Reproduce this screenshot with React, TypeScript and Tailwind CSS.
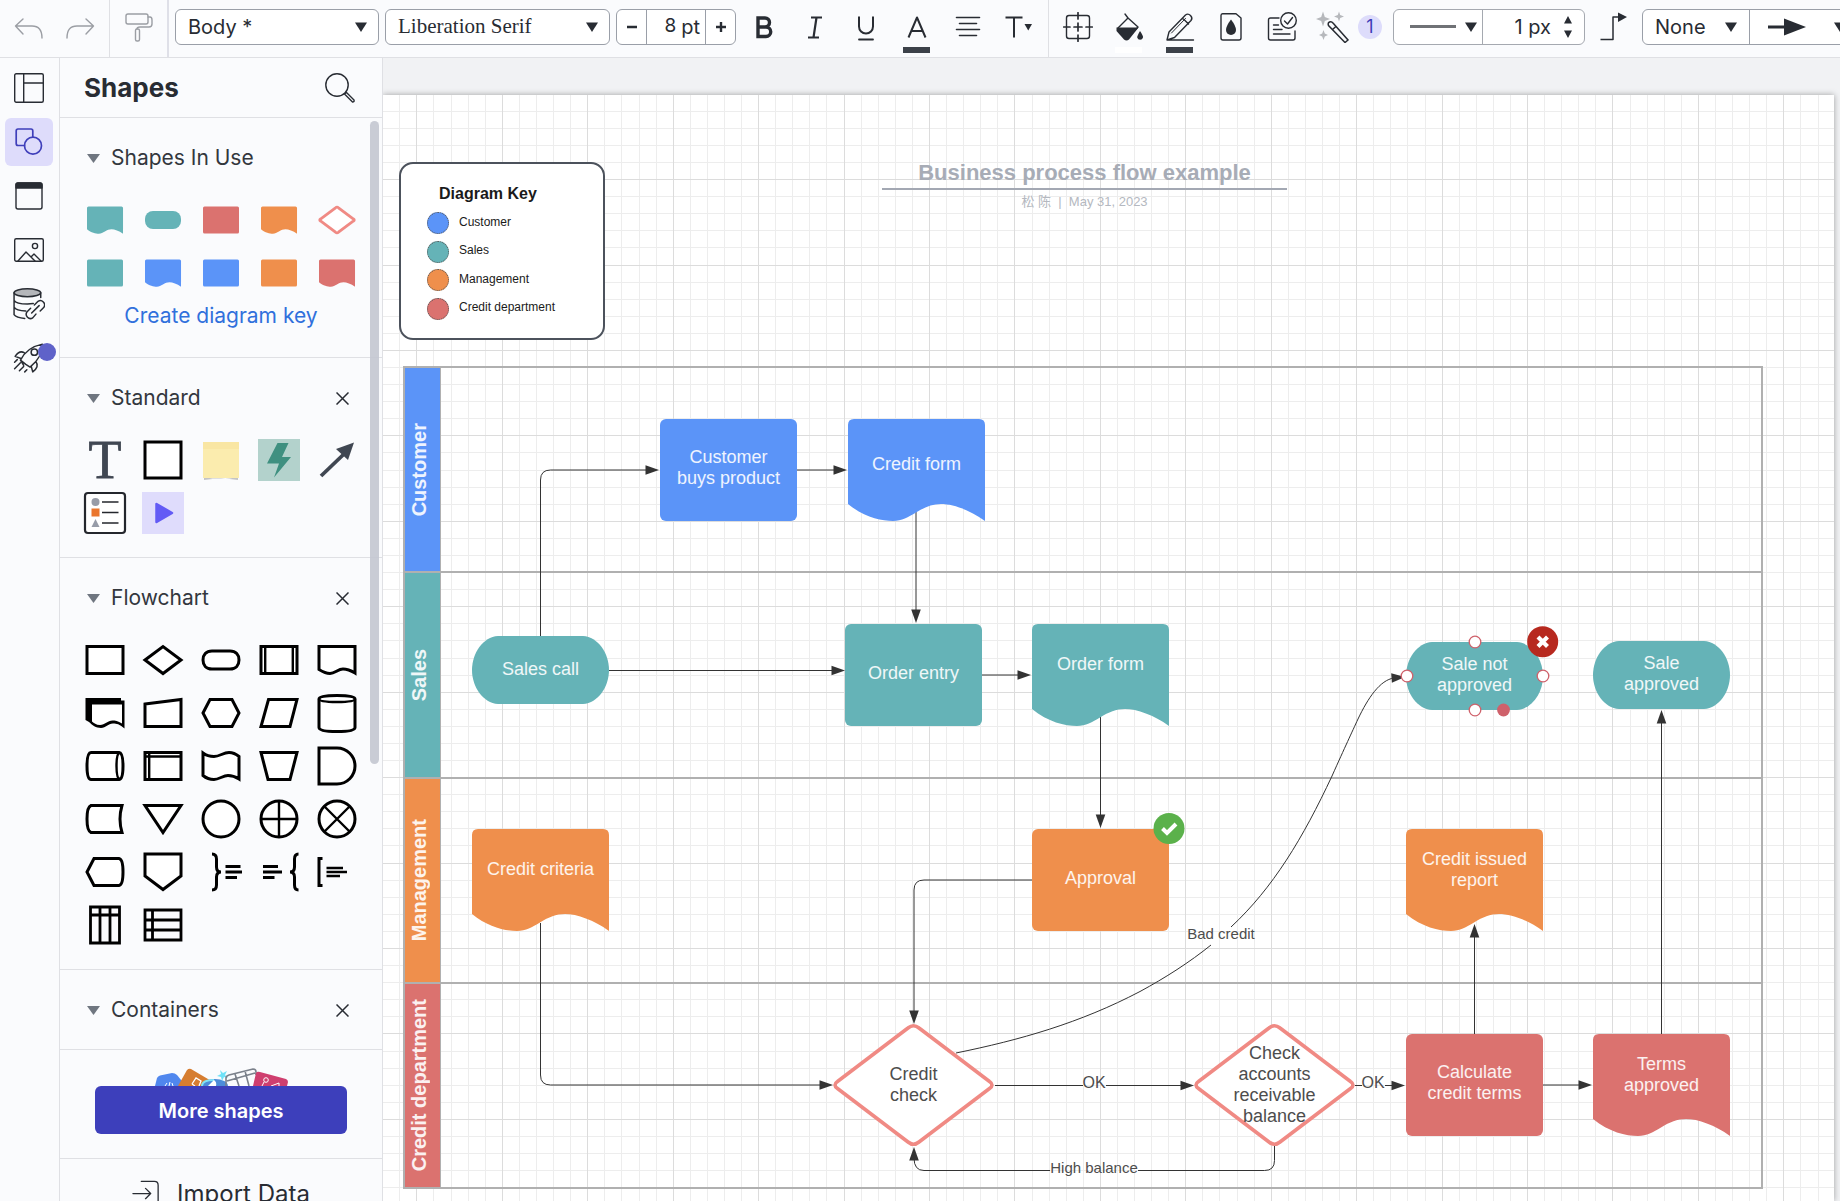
import React from "react";

const BLUE = "#5b94f8";
const TEAL = "#65b3b7";
const ORANGE = "#ef8f4c";
const RED = "#db726f";
const PINK = "#f08a84";
const INK = "#282c33";

/* Document co-ordinate shown at the top left corner of the page. */
const VIEW = { x: 383, y: 95 };

const WAVE =
  "M0 6 Q0 0 6 0 H131 Q137 0 137 6 V102 C122 91 105 85 93 85 C84 85 77 88 68 93.500 C60 98 54 102 45 102 C33 102 16 98 0 85 Z";

/* ---------- toolbar ---------- */

function Icon({ size = 30, children }: { size?: number; children: React.ReactNode }) {
  return (
    <svg
      width={size}
      height={size}
      viewBox="0 0 30 30"
      fill="none"
      stroke="currentColor"
      strokeWidth={1.4}
      strokeLinecap="round"
      strokeLinejoin="round"
      aria-hidden="true"
      className="shrink-0"
    >
      {children}
    </svg>
  );
}

function ToolButton({ label, children, bar }: { label: string; children: React.ReactNode; bar?: string }) {
  return (
    <button aria-label={label} className="relative flex h-[57px] w-[51px] shrink-0 items-center justify-center pb-[3px]">
      {children}
      {bar && <span className={`absolute bottom-1 h-[6px] w-[27px] ${bar}`} />}
    </button>
  );
}

function Caret({ className = "" }: { className?: string }) {
  return (
    <svg width="12" height="10" viewBox="0 0 12 10" className={`pointer-events-none shrink-0 ${className}`} aria-hidden="true">
      <path d="M0 0.500H12L6 10Z" fill={INK} />
    </svg>
  );
}

function Toolbar() {
  return (
    <header className="flex h-[58px] shrink-0 items-center overflow-hidden border-b border-[#dfe0e4] bg-[#fafbfd] text-xl text-[#282c33]">
      <div className="flex h-full w-[110px] shrink-0 justify-center border-r border-[#dfe0e4] text-[#9b9ea4]">
        <ToolButton label="Undo">
          <Icon>
            <path d="M9 7L1.500 14L9 22M1.500 14H18C25 14 28 18 28 26" />
          </Icon>
        </ToolButton>
        <ToolButton label="Redo">
          <Icon>
            <path d="M21 7L28.500 14L21 22M28.500 14H12C5 14 2 18 2 26" />
          </Icon>
        </ToolButton>
      </div>
      <div className="flex h-full w-[59px] shrink-0 justify-center border-r-2 border-[#dfe0e8] text-[#9b9ea4]">
        <ToolButton label="Format painter">
          <Icon>
            <rect x="2" y="2" width="22" height="10" rx="2" />
            <path d="M24 5H26Q28 5 28 8V12Q28 15 25 15H16Q13 15 13 17" />
            <rect x="11.500" y="17" width="4" height="12" rx="1.500" />
          </Icon>
        </ToolButton>
      </div>
      <div className="ml-[6px] flex shrink-0 items-center gap-[6px] pb-1">
        <label className="relative block">
          <select aria-label="Text style" className="h-9 w-[204px] appearance-none rounded-md border border-[#9a9fa8] bg-white pl-3 font-[Inter,sans-serif]">
            <option>Body *</option>
          </select>
          <Caret className="absolute right-3 top-[13px]" />
        </label>
        <label className="relative block">
          <select
            aria-label="Font"
            className="h-9 w-[225px] appearance-none rounded-md border border-[#9a9fa8] bg-white pl-3 font-['Liberation_Serif',serif] text-[21px]"
          >
            <option>Liberation Serif</option>
          </select>
          <Caret className="absolute right-3 top-[13px]" />
        </label>
        <div className="flex h-9 w-[120px] overflow-hidden rounded-md border border-[#9a9fa8] bg-white">
          <button aria-label="Decrease font size" className="flex w-[30px] items-center justify-center border-r border-[#9a9fa8]">
            <svg width="10" height="12" aria-hidden="true"><path d="M0 6H10" stroke={INK} strokeWidth="2.400" /></svg>
          </button>
          <label className="flex flex-1 items-center justify-end gap-[5px] pr-[5px]">
            <input aria-label="Font size" defaultValue="8" className="w-4 bg-transparent text-right text-[19px] outline-none" />
            <span>pt</span>
          </label>
          <button aria-label="Increase font size" className="flex w-[30px] items-center justify-center border-l border-[#9a9fa8]">
            <svg width="12" height="12" aria-hidden="true"><path d="M1 6H11M6 1V11" stroke={INK} strokeWidth="2.400" /></svg>
          </button>
        </div>
      </div>
      <div className="ml-[2px] flex shrink-0">
        <ToolButton label="Bold">
          <Icon>
            <path d="M9 6H16A4.500 4.500 0 0 1 16 15H9ZM9 15H17A4.500 4.500 0 0 1 17 24.500H9Z" strokeWidth="3.400" strokeLinejoin="miter" />
          </Icon>
        </ToolButton>
        <ToolButton label="Italic">
          <Icon>
            <path d="M11 5.500H22M8 25.500H19M16.500 5.500L13.500 25.500" strokeWidth="2.200" strokeLinecap="butt" />
          </Icon>
        </ToolButton>
        <ToolButton label="Underline">
          <Icon>
            <path d="M8 4.500V14.500A7 7 0 0 0 22 14.500V4.500" strokeWidth="2" strokeLinecap="butt" />
            <path d="M8 27.500H22" strokeWidth="1.800" />
          </Icon>
        </ToolButton>
        <ToolButton label="Text color" bar="bg-[#3c4149]">
          <Icon>
            <path d="M6.500 25.500L15 5.500L23.500 25.500M9.500 19H20.500" strokeWidth="2" strokeLinecap="butt" />
          </Icon>
        </ToolButton>
        <ToolButton label="Text alignment">
          <Icon>
            <path d="M3.500 5.500H26.500M6.500 11.500H23.500M3.500 17.500H26.500M6.500 23.500H23.500" strokeWidth="1.600" />
          </Icon>
        </ToolButton>
        <ToolButton label="More text options">
          <Icon>
            <path d="M1.500 5.500H18.500M10 5.500V25.500" strokeWidth="2" strokeLinecap="butt" />
            <path d="M20.500 12H28L24.250 18.500Z" fill="currentColor" stroke="none" />
          </Icon>
        </ToolButton>
      </div>
      <div className="ml-1 h-full border-l border-[#dfe0e4]" />
      <div className="ml-[3px] flex shrink-0 items-center">
        <ToolButton label="Position">
          <Icon>
            <rect x="3.500" y="3.500" width="23" height="23" rx="2.500" />
            <path d="M15 0.700V7M15 11V19M15 23V29.300M0.700 15H7M11 15H19M23 15H29.300" strokeWidth="1.700" />
          </Icon>
        </ToolButton>
        <ToolButton label="Fill color" bar="bg-white">
          <Icon>
            <path d="M11 2L14 6L4 16L13 27L24 15L14 6" />
            <path d="M2.500 15.500H24.500L15 27.500Q12.500 29.500 10 27.500L2.500 19Z" fill="currentColor" stroke="none" />
            <path d="M26 19Q29.500 24 29 25.500A3 3 0 0 1 23.200 25.500Q23 24 26 19Z" fill="currentColor" stroke="none" />
          </Icon>
        </ToolButton>
        <ToolButton label="Line color" bar="bg-[#3c4149]">
          <Icon>
            <path d="M2 28L4 20L20.500 3Q23 1 25.500 3.500Q28 6 26 8.500L9.500 25.500L2 28H28.500M17.500 6L23.500 12" />
            <path d="M6.500 21L20.500 6.500" strokeWidth="1" />
          </Icon>
        </ToolButton>
        <ToolButton label="Opacity">
          <Icon>
            <path d="M6.500 1.700H20L25 6V26Q25 28 23 28H7Q5 28 5 26V3.500Q5 1.700 6.500 1.700Z" />
            <path d="M15 7.500Q20 14 20 18A5 5 0 0 1 10 18Q10 14 15 7.500Z" fill="currentColor" stroke="none" />
          </Icon>
        </ToolButton>
        <ToolButton label="Tasks">
          <Icon>
            <path d="M12 6H3.500Q1.500 6 1.500 8V26Q1.500 28 3.500 28H26Q28 28 28 26V19" />
            <circle cx="21.500" cy="8.500" r="7.800" />
            <path d="M17.500 9L20.500 12L25.500 5.500M6.500 13H11.500M6.500 17.500H15M6.500 22H23" />
          </Icon>
        </ToolButton>
        <ToolButton label="Magic format">
          <svg width="34" height="32" viewBox="0 0 34 32" fill="none" stroke="currentColor" strokeWidth="1.500" aria-hidden="true">
            <path d="M7 0.500L8.800 6L14 8L8.800 10L7 15.500L5.200 10L0 8L5.200 6ZM23 0.500L24.200 4L28 5.500L24.200 7L23 10.500L21.800 7L18 5.500L21.800 4ZM7.500 19L8.800 22.500L12 24L8.800 25.500L7.500 29L6.200 25.500L3 24L6.200 22.500Z" fill="#b6b8bc" stroke="none" />
            <path d="M12.500 14.500Q11.500 12 13.500 11Q15.500 10 17 12L32 29L29 31.500L12.500 14.500ZM16.500 18.500L20.500 15" />
          </svg>
        </ToolButton>
        <span className="mb-1 flex size-6 items-center justify-center rounded-full bg-[#dddcfb] text-lg text-[#3f3db8]">1</span>
      </div>
      <div className="mb-1 ml-[11px] flex h-9 w-[192px] shrink-0 rounded-md border border-[#a5a9b0] bg-white">
        <button aria-label="Line style" className="flex flex-1 items-center justify-end gap-[9px] border-r border-[#a5a9b0] pr-[5px]">
          <span className="h-[3px] w-[46px] bg-[#707276]" />
          <Caret />
        </button>
        <label className="flex w-[101px] items-center justify-end gap-[13px] pr-3">
          <input aria-label="Line width" defaultValue="1 px" className="w-14 bg-transparent text-right outline-none" />
          <svg width="8" height="22" viewBox="0 0 8 22" aria-hidden="true">
            <path d="M4 0L8 7.500H0ZM4 22L8 14.500H0Z" fill={INK} />
          </svg>
        </label>
      </div>
      <div className="ml-[3px] flex w-[54px] shrink-0">
        <ToolButton label="Line shape">
          <Icon>
            <path d="M1.500 27.500H14V5H20" strokeWidth="1.500" strokeLinecap="butt" />
            <path d="M19 0.500L28 5L19 10Z" fill="currentColor" stroke="none" />
          </Icon>
        </ToolButton>
      </div>
      <div className="mb-1 flex h-9 shrink-0 rounded-md border border-[#9a9fa8] bg-white">
        <label className="relative block border-r border-[#9a9fa8]">
          <select aria-label="Line start" className="h-full w-[106px] appearance-none bg-transparent pl-3">
            <option>None</option>
          </select>
          <Caret className="absolute right-3 top-[12px]" />
        </label>
        <button aria-label="Line end" className="flex w-[110px] items-center gap-7 pl-[18px]">
          <svg width="38" height="18" viewBox="0 0 38 18" aria-hidden="true">
            <path d="M0 9H18" stroke={INK} strokeWidth="3" />
            <path d="M16 0.500L38 9L16 17.500Z" fill={INK} />
          </svg>
          <Caret />
        </button>
      </div>
    </header>
  );
}

/* ---------- left rail ---------- */

function RailButton({ label, active, children }: { label: string; active?: boolean; children: React.ReactNode }) {
  return (
    <button
      aria-label={label}
      className={`relative flex size-12 items-center justify-center rounded-md ${active ? "bg-[#dedcfb] text-[#3f3fba]" : "text-[#282c33]"}`}
    >
      {children}
    </button>
  );
}

function Rail() {
  return (
    <nav aria-label="Tools" className="flex w-[60px] shrink-0 flex-col items-center gap-[6px] border-r border-[#dfe0e4] bg-[#fafbfd] pr-[2px] pt-[6px]">
      <RailButton label="Templates">
        <Icon>
          <rect x="0.700" y="0.700" width="28.600" height="28.600" rx="1.500" />
          <path d="M9.700 1V29M10 10H29" />
        </Icon>
      </RailButton>
      <RailButton label="Shapes" active>
        <Icon>
          <path d="M10.500 18.500H4Q2.200 18.500 2.200 16.500V4Q2.200 2 4 2H17Q18.800 2 18.800 4V9.500" strokeWidth="1.700" />
          <circle cx="19" cy="18.700" r="8.500" strokeWidth="1.700" />
        </Icon>
      </RailButton>
      <RailButton label="Frames">
        <Icon>
          <rect x="2" y="2" width="26" height="26" rx="2" />
          <path d="M2 4Q2 2 4 2H26Q28 2 28 4V7H2Z" fill="currentColor" />
        </Icon>
      </RailButton>
      <RailButton label="Images">
        <Icon>
          <rect x="0.700" y="3.700" width="28.600" height="22.600" rx="1.500" />
          <circle cx="21" cy="11" r="2.600" />
          <path d="M4 26L12 17L21 26M17.500 21.500L20 19L27 26" />
        </Icon>
      </RailButton>
      <RailButton label="Data linking">
        <Icon size={32}>
          <ellipse cx="13.500" cy="4.500" rx="12.500" ry="3.700" fill="#b4b6ba" />
          <path d="M1 4.500V25Q3 28 11 28.500M1 11.500Q3 15 13.500 15L19 14.500M1 18Q3 21.500 12 21.500M26 4.500V9" />
          <path d="M20 16L23.500 12.500A4 4 0 0 1 29 18L25.500 21.500M21.500 24.500L18.500 28A4 4 0 0 1 13 22.500L16.500 19M17.500 23.500L24.500 16.500" />
        </Icon>
      </RailButton>
      <RailButton label="Feature finder">
        <Icon size={32}>
          <path d="M7 17Q13 5 27.500 2Q28 14 16 23.500L12 21ZM10.500 10Q6 7.500 2 13.500L7.500 15.500M21.500 18.500Q25 23 18.500 28L17 22.500M7 17L10 22" />
          <circle cx="20" cy="9.500" r="3" />
          <path d="M1.500 19L4 16.500M1.500 25L7 19.500M6 27L10 23M11 28L13 26" />
        </Icon>
        <span className="absolute right-[-3px] top-[9px] size-[18px] rounded-full bg-[#5f62c9]" />
      </RailButton>
    </nav>
  );
}

/* ---------- shapes panel ---------- */

function Section({ title, closable, className = "", children }: { title: string; closable?: boolean; className?: string; children?: React.ReactNode }) {
  return (
    <section className={`border-b border-[#dfe0e4] pt-5 ${className}`}>
      <div className="flex h-10 items-center justify-between pl-[27px] pr-8">
        <button className="flex items-center gap-[11px] text-[21px] text-[#33373d]">
          <svg width="13" height="9" viewBox="0 0 13 9" aria-hidden="true">
            <path d="M0 0H13L6.500 9Z" fill="#6f7680" />
          </svg>
          {title}
        </button>
        {closable && (
          <button aria-label={`Close ${title}`} className="p-px">
            <svg width="13" height="13" viewBox="0 0 13 13" stroke={INK} strokeWidth="1.500" aria-hidden="true">
              <path d="M0.500 0.500L12.500 12.500M12.500 0.500L0.500 12.500" />
            </svg>
          </button>
        )}
      </div>
      {children}
    </section>
  );
}

function ShapeGrid({ items }: { items: { name: string; art: React.ReactNode }[] }) {
  return (
    <div className="ml-4 mt-[15px] grid w-[290px] auto-rows-[53px] grid-cols-5">
      {items.map((item, i) => (
        <button key={i} aria-label={item.name} className="flex items-center justify-center">
          <svg width="42" height="42" viewBox="-21 -21 42 42" className="overflow-visible" aria-hidden="true">
            {item.art}
          </svg>
        </button>
      ))}
    </div>
  );
}

const block = (c: string) => <rect x="-18" y="-13.500" width="36" height="27" rx="1.500" fill={c} />;
const page = (c: string) => <path d={WAVE} fill={c} transform="translate(-18 -13.500) scale(0.263 0.267)" />;

const USED = [
  { name: "Sales document", art: page(TEAL) },
  { name: "Sales terminator", art: <rect x="-18" y="-9" width="36" height="18" rx="8" fill={TEAL} /> },
  { name: "Credit process", art: block(RED) },
  { name: "Management document", art: page(ORANGE) },
  { name: "Decision", art: <path d="M-1.500 -12.200Q0 -13.500 1.500 -12.200L16.500 -1Q18 0 16.500 1L1.500 12.200Q0 13.500 -1.500 12.200L-16.500 1Q-18 0 -16.500 -1Z" fill="#fff" stroke={PINK} strokeWidth="2.800" /> },
  { name: "Sales process", art: block(TEAL) },
  { name: "Customer document", art: page(BLUE) },
  { name: "Customer process", art: block(BLUE) },
  { name: "Management process", art: block(ORANGE) },
  { name: "Credit document", art: page(RED) },
];

const STANDARD = [
  { name: "Text", art: <text x="0" y="18" textAnchor="middle" className="font-['Liberation_Serif',serif] text-[54px]" fill="#404752" stroke="#404752" strokeWidth="0.800">T</text> },
  { name: "Block", art: <rect x="-18" y="-18" width="36" height="36" fill="#fff" stroke="#000" strokeWidth="3" /> },
  {
    name: "Sticky note",
    art: (
      <g>
        <path d="M-17 17Q0 21 17 17V20Q0 17 -17 20Z" fill="#c4c4c4" />
        <rect x="-18" y="-18" width="36" height="36" fill="#fbecae" />
        <rect x="-18" y="-18" width="36" height="7" fill="#f9e6a3" />
      </g>
    ),
  },
  {
    name: "Action",
    art: (
      <g>
        <rect x="-21" y="-21" width="42" height="42" fill="#b3d2cc" />
        <path d="M-1.500 -17H9.500L3 -3H12L-5 17.500L0 3.500H-12Z" fill="#3f9080" />
      </g>
    ),
  },
  {
    name: "Line",
    art: (
      <g>
        <path d="M-16 16L7 -6" stroke="#404752" strokeWidth="3.800" />
        <path d="M17 -17.500L11 0L-1 -11Z" fill="#404752" />
      </g>
    ),
  },
  {
    name: "Diagram key",
    art: (
      <g>
        <rect x="-20" y="-20" width="40" height="40" rx="3" fill="#fff" stroke="#24272d" strokeWidth="2.200" />
        <circle cx="-9.500" cy="-11" r="4" fill="#979ca8" />
        <rect x="-13.500" y="-4.500" width="8" height="8" fill="#ea762e" />
        <path d="M-9.500 6L-5.500 14H-13.500Z" fill="#979ca8" />
        <path d="M-3 -11H13.500M-3 -0.500H13.500M-3 10H13.500" stroke="#24272d" strokeWidth="1.300" />
      </g>
    ),
  },
  {
    name: "Presentation",
    art: (
      <g>
        <rect x="-21" y="-21" width="42" height="42" fill="#dfdcfc" />
        <path d="M-6.500 -9V9L9 0Z" fill="#635bf5" stroke="#635bf5" strokeWidth="2.500" strokeLinejoin="round" />
      </g>
    ),
  },
];

const outline = (d: string, inner?: string) => (
  <g stroke="#000" strokeWidth="3">
    <path d={d} fill="#fff" />
    {inner && <path d={inner} fill="none" strokeWidth="2.400" />}
  </g>
);
const BOX = "M-18 -13.500H18V13.500H-18Z";
const DISC = "M-18 0A18 18 0 1 1 18 0A18 18 0 1 1 -18 0Z";

const FLOW = [
  { name: "Process", art: outline(BOX) },
  { name: "Decision", art: outline("M-18 0L0 -13.500L18 0L0 13.500Z") },
  { name: "Terminator", art: outline("M-9 -9H9C15 -9 18 -5 18 0S15 9 9 9H-9C-15 9 -18 5 -18 0S-15 -9 -9 -9Z") },
  { name: "Predefined process", art: outline(BOX, "M-13.800 -13V13M13.800 -13V13") },
  { name: "Document", art: outline("M-18 -13.500H18V13C13 10 9 9 6 9C1 9 -2 13.500 -7 13.500C-11 13.500 -14 12 -18 9.500Z") },
  {
    name: "Multiple documents",
    art: (
      <g>
        <path d="M-19.500 -15H16V-12.500H19.500V15.500C14 11 12 10.500 8 10.500C3 10.500 1 15 -4 15C-9 15 -13 12 -16 9L-19.500 7Z" fill="#000" />
        <path d="M-13 -8.500H17V10.500C13 8 10 7.500 7.500 7.500C2.500 7.500 0 12 -5 12C-9 12 -11 10 -13 8.500Z" fill="#fff" />
      </g>
    ),
  },
  { name: "Manual input", art: outline("M-18 -9L18 -13.500V13.500H-18Z") },
  { name: "Preparation", art: outline("M-18 0L-11 -13.500H11L18 0L11 13.500H-11Z") },
  { name: "Data", art: outline("M-10.500 -13.500H18L11 13.500H-18Z") },
  { name: "Database", art: outline("M-18 -14Q-18 -17.500 0 -17.500T18 -14V14.500Q18 18.500 0 18.500T-18 14.500Z", "M-18 -14Q-18 -11 0 -11T18 -14") },
  { name: "Direct data", art: outline("M-14 -13.500H14Q18 -13.500 18 0T14 13.500H-14Q-18 13.500 -18 0T-14 -13.500Z", "M15 -13.500Q11.500 -13 11.500 0T15 13.500") },
  { name: "Internal storage", art: outline(BOX, "M-18 -9.500H18M-13.800 -13V13") },
  { name: "Paper tape", art: outline("M-18 -13C-14 -10 -10 -9.500 -7 -9.500C-1 -9.500 2 -13.500 8 -13.500C12 -13.500 15 -12 18 -9.500V13C14 10.500 11 9.500 7 9.500C2 9.500 -2 13.500 -7 13.500C-11 13.500 -15 12 -18 9.500Z") },
  { name: "Manual operation", art: outline("M-18 -13.500H18L11 13.500H-11Z") },
  { name: "Delay", art: outline("M-18 -18H0A18 18 0 0 1 0 18H-18Z") },
  { name: "Stored data", art: outline("M-14 -13.500H17Q13 0 17 13.500H-14Q-18 12 -18 0T-14 -13.500Z") },
  { name: "Merge", art: outline("M-18 -13.500H18L0 13.500Z") },
  { name: "Connector", art: outline(DISC) },
  { name: "Or", art: outline(DISC, "M0 -18V18M-18 0H18") },
  { name: "Summing junction", art: outline(DISC, "M-12.500 -12.500L12.500 12.500M12.500 -12.500L-12.500 12.500") },
  { name: "Display", art: outline("M-18 0L-11 -13.500H14Q18 -13 18 0T14 13.500H-11Z") },
  { name: "Off-page link", art: outline("M-18 -18H18V4L0 17.500L-18 4Z") },
  { name: "Brace note right", art: <path d="M-9 -18Q-4.500 -18 -4.500 -13V-5Q-4.500 0 0 0Q-4.500 0 -4.500 5V13Q-4.500 18 -9 18M4.500 -5.500H19.500M4.500 0H21M4.500 5.500H16" fill="none" stroke="#000" strokeWidth="3" /> },
  { name: "Brace note left", art: <path d="M19.500 -18Q15.500 -18 15.500 -13V-5Q15.500 0 11 0Q15.500 0 15.500 5V13Q15.500 18 19.500 18M-16 -5.500H-1M-16 0H3M-16 5.500H-4.500" fill="none" stroke="#000" strokeWidth="3" /> },
  {
    name: "Note",
    art: (
      <g fill="none" stroke="#000">
        <path d="M-14.500 -13.500H-18V13.500H-14.500" strokeWidth="3" />
        <path d="M-10.500 -4H6M-10.500 0H10M-10.500 4H3" strokeWidth="2.400" />
      </g>
    ),
  },
  { name: "Vertical swim lanes", art: <path d="M-14.500 -18H14.500V18H-14.500ZM-14.500 -10H14.500M-5 -18V18M5 -18V18" fill="none" stroke="#000" strokeWidth="2.800" /> },
  { name: "Horizontal swim lanes", art: <path d="M-18 -15H18V15H-18ZM-10.500 -15V15M-18 -5H18M-18 5H18" fill="none" stroke="#000" strokeWidth="2.800" /> },
];

function ShapesPanel() {
  return (
    <aside className="relative flex w-[323px] shrink-0 flex-col overflow-hidden border-r border-[#dfe0e4] bg-[#fafbfd]">
      <div className="flex h-[60px] shrink-0 items-center justify-between border-b border-[#dfe0e4] pl-6 pr-[27px]">
        <h1 className="text-[26px] font-bold text-[#282c33]">Shapes</h1>
        <button aria-label="Search shapes" className="text-[#282c33]">
          <Icon>
            <circle cx="12" cy="12" r="11.200" />
            <path d="M19.500 21L21.500 19.500L29 27Q29.500 29 27.500 29Z" />
          </Icon>
        </button>
      </div>
      <Section title="Shapes In Use" className="h-[240px] shrink-0">
        <ShapeGrid items={USED} />
        <a href="#key" className="block h-8 pt-px text-center text-[21px] leading-8 text-[#3070dc]">
          Create diagram key
        </a>
      </Section>
      <Section title="Standard" closable className="shrink-0 pb-[18px]">
        <ShapeGrid items={STANDARD} />
      </Section>
      <Section title="Flowchart" closable className="shrink-0 pb-[18px]">
        <ShapeGrid items={FLOW} />
      </Section>
      <Section title="Containers" closable className="shrink-0 pb-[19px]" />
      <div className="shrink-0 border-b border-[#dfe0e4] px-[35px] pb-6 pt-[18px]">
        <svg width="136" height="18" viewBox="0 0 136 18" className="mx-auto block" aria-hidden="true">
          <path d="M2 18L4 10Q5 8 7 7.500L19 5Q22 5 24 7L33 18Z" fill="#5087ee" />
          <path d="M12 18L14 15M16 18L17 14M20 18L19 15" stroke="#fff" />
          <path d="M25 18L34 2Q36 0 38 1L60 14V18Z" fill="#d67d30" />
          <path d="M39 16L43 10L48 13L46 18M39 16L42 18" stroke="#fff" fill="none" strokeWidth="1.300" />
          <ellipse cx="62" cy="18" rx="13" ry="7" fill="#4d8cd9" />
          <path d="M49 18Q49 12 61 12" stroke="#7fe4f5" strokeWidth="2" fill="none" />
          <path d="M55 18L61 12Q64 14 63 18Z" fill="#fff" />
          <path d="M67 2L70 5L74 3L72 7L75 10L71 9L69 13L68 9L64 8L68 6Z" fill="#70e2f7" />
          <path d="M73 18V10Q73 8 76 7L100 1Q103 1 103 4V7M74 13L102 5M82 6L86 18M92 3L96 18" stroke="#7b818b" strokeWidth="1.600" fill="none" />
          <path d="M100 18L103 5Q104 3 107 4L133 11Q135 12 135 14L134 18Z" fill="#cf3f6f" />
          <path d="M109 18L111 14M118 18L126 15V18" stroke="#fff" fill="none" />
          <circle cx="113" cy="12" r="2.300" stroke="#fff" fill="none" />
        </svg>
        <button className="h-12 w-full rounded-md bg-[#3d3fbb] pt-px text-xl font-semibold text-white">More shapes</button>
      </div>
      <button className="flex h-[70px] shrink-0 items-center justify-center gap-[17px] text-2xl text-[#282c33]">
        <Icon size={28}>
          <path d="M10 1.500H24Q28 1.500 28 5.500V25Q28 28.500 24 28.500H10M1 14.500H20M14.500 9L20 14.500L14.500 20" />
        </Icon>
        Import Data
      </button>
      <div className="pointer-events-none absolute right-[3px] top-[63px] h-[643px] w-[9px] rounded-full bg-[#c3c6d0]/90" />
    </aside>
  );
}

/* ---------- diagram ---------- */

function Grid() {
  const minor: string[] = [];
  const major: string[] = [];
  for (let i = -1; i < 140; i++) {
    (i % 5 === 0 ? major : minor).push(`M${Math.round(416.4 + i * 17.087) - VIEW.x + 0.5} 0V2400`);
  }
  for (let i = -4; i < 120; i++) {
    (i % 5 === 0 ? major : minor).push(`M0 ${Math.round(179.1 + i * 17.087) - VIEW.y + 0.5}H3000`);
  }
  return (
    <svg className="absolute inset-0 size-full" aria-hidden="true">
      <path d={minor.join("")} stroke="#ededed" />
      <path d={major.join("")} stroke="#dcdcdc" />
    </svg>
  );
}

const LANES = [
  { name: "Customer", tone: "bg-[#5b94f8]" },
  { name: "Sales", tone: "bg-[#65b3b7]" },
  { name: "Management", tone: "bg-[#ef8f4c]" },
  { name: "Credit department", tone: "bg-[#db726f]" },
];

function Lanes() {
  return (
    <div className="absolute left-[20px] top-[271px] grid h-[823px] w-[1360px] grid-rows-4 border-b-2 border-r-2 border-[#b0b0b0]">
      {LANES.map((lane) => (
        <div key={lane.name} className="flex border-l-2 border-t-2 border-[#b0b0b0]">
          <div className={`flex w-9 items-center justify-center border-r border-[#b0b0b0] pr-[7px] ${lane.tone}`}>
            <span className="rotate-180 whitespace-nowrap text-xl font-bold leading-5 text-white/90 [writing-mode:vertical-rl]">{lane.name}</span>
          </div>
        </div>
      ))}
    </div>
  );
}

type Kind = "box" | "doc" | "form" | "pill" | "diamond";
type NodeData = { kind: Kind; x: number; y: number; color: string; text: string[] };

const NODES: NodeData[] = [
  { kind: "box", x: 660, y: 419, color: BLUE, text: ["Customer", "buys product"] },
  { kind: "form", x: 848, y: 419, color: BLUE, text: ["Credit form"] },
  { kind: "pill", x: 472, y: 636, color: TEAL, text: ["Sales call"] },
  { kind: "box", x: 845, y: 624, color: TEAL, text: ["Order entry"] },
  { kind: "doc", x: 1032, y: 624, color: TEAL, text: ["Order form"] },
  { kind: "pill", x: 1406, y: 642, color: TEAL, text: ["Sale not", "approved"] },
  { kind: "pill", x: 1593, y: 641, color: TEAL, text: ["Sale", "approved"] },
  { kind: "doc", x: 472, y: 829, color: ORANGE, text: ["Credit criteria"] },
  { kind: "box", x: 1032, y: 829, color: ORANGE, text: ["Approval"] },
  { kind: "doc", x: 1406, y: 829, color: ORANGE, text: ["Credit issued", "report"] },
  { kind: "box", x: 1406, y: 1034, color: RED, text: ["Calculate", "credit terms"] },
  { kind: "doc", x: 1593, y: 1034, color: RED, text: ["Terms", "approved"] },
  { kind: "diamond", x: 833, y: 1024, color: PINK, text: ["Credit", "check"] },
  { kind: "diamond", x: 1194, y: 1024, color: PINK, text: ["Check", "accounts", "receivable", "balance"] },
];

const FRAME: Record<Kind, string> = {
  box: "h-[102px] w-[137px] pb-1 text-white/90",
  doc: "h-[102px] w-[137px] pb-[21px] text-white/90",
  form: "h-[102px] w-[137px] pb-[11px] text-white/90",
  pill: "h-[68px] w-[137px] pb-[2px] text-white/90",
  diamond: "h-[122px] w-[161px] pb-px text-[#4d4d4d]",
};

function Outline({ kind, color }: { kind: Kind; color: string }) {
  if (kind === "box") return <rect width="137" height="102" rx="6" fill={color} />;
  if (kind === "doc" || kind === "form") return <path d={WAVE} fill={color} />;
  if (kind === "pill") return <path d="M26 0H111C126 1 137 17 137 34S126 67 111 68H26C11 67 0 51 0 34S11 1 26 0Z" fill={color} />;
  return (
    <path
      d="M75 4Q80.500 -0.500 86 4L156.500 57.500Q161.500 61 156.500 64.500L86 118Q80.500 122.500 75 118L4.500 64.500Q-0.500 61 4.500 57.500Z"
      fill="#fff"
      stroke={color}
      strokeWidth="3.600"
    />
  );
}

function DiagramNode({ node }: { node: NodeData }) {
  return (
    <div
      className={`absolute flex flex-col items-center justify-center text-lg leading-[21px] ${FRAME[node.kind]}`}
      style={{ left: node.x - VIEW.x, top: node.y - VIEW.y }}
    >
      <svg className="absolute inset-0 size-full overflow-visible" aria-hidden="true">
        <Outline kind={node.kind} color={node.color} />
      </svg>
      {node.text.map((line) => (
        <span key={line} className="relative whitespace-nowrap">
          {line}
        </span>
      ))}
    </div>
  );
}

const LINKS = [
  "M540.500 636V480Q540.500 470 550.500 470H646",
  "M797 470H834",
  "M916 512V610",
  "M609 670.500H832",
  "M982 675H1018",
  "M1100.500 717V815",
  "M1032 880H924Q914 880 914 890V1011",
  "M540.500 923V1075Q540.500 1085 550.500 1085H820",
  "M995 1085.500H1083M1106 1085.500H1181",
  "M1355 1085.500H1362M1385 1085.500H1392",
  "M1543 1085H1580",
  "M1474.500 1034V937",
  "M1661.500 1034V723",
  "M1274.500 1146V1160.500Q1274.500 1170.500 1264.500 1170.500H1138M1050 1170.500H924Q914 1170.500 914 1158",
  "M956 1053C1020 1040 1080 1023 1140 991.500C1165 978 1190 962 1211 945M1231 927C1273 888 1303 838 1332 776C1345 747 1352 732 1358 719C1368 698 1380 680 1394 678",
];

/* Arrow heads: tip position and heading in degrees, 0 pointing right. */
const HEADS = [
  [659, 470, 0],
  [847, 470, 0],
  [916, 623, 90],
  [845, 670.5, 0],
  [1031, 675, 0],
  [1100.5, 828, 90],
  [914, 1024, 90],
  [833, 1085, 0],
  [1194, 1085.5, 0],
  [1405, 1085.5, 0],
  [1592, 1085, 0],
  [1474.5, 924, -90],
  [1661.5, 710, -90],
  [914, 1147, -90],
  [1405, 677, -4],
];

function Connectors() {
  return (
    <svg className="absolute inset-0 size-full overflow-visible" aria-hidden="true">
      <g transform={`translate(${-VIEW.x} ${-VIEW.y})`}>
        <path d={LINKS.join("")} fill="none" stroke="#333" />
        {HEADS.map(([x, y, turn], i) => (
          <path key={i} d="M0 0L-13.500 -4.800V4.800Z" fill="#333" transform={`translate(${x} ${y}) rotate(${turn})`} />
        ))}
      </g>
    </svg>
  );
}

function Marks() {
  return (
    <svg className="absolute inset-0 size-full overflow-visible" aria-hidden="true">
      <g transform={`translate(${-VIEW.x} ${-VIEW.y})`}>
        {[[1475, 642], [1407, 676], [1543, 676], [1475, 710]].map(([x, y]) => (
          <circle key={`${x}-${y}`} cx={x} cy={y} r="5.800" fill="#fff" stroke="#cf616b" strokeWidth="1.300" />
        ))}
        <circle cx="1503.500" cy="710" r="6.400" fill="#cf616b" />
        <circle cx="1542.700" cy="641.700" r="15.500" fill="#b7291f" />
        <path d="M1538 637L1547.500 646.500M1547.500 637L1538 646.500" stroke="#fff" strokeWidth="4.200" />
        <circle cx="1169" cy="828.500" r="15.500" fill="#5bb14b" />
        <path d="M1162.500 828.500L1167 833L1176 824" stroke="#fff" strokeWidth="4" fill="none" />
      </g>
    </svg>
  );
}

const LABELS = [
  { text: "OK", x: 1094, y: 1083, size: "text-base" },
  { text: "OK", x: 1373, y: 1083, size: "text-base" },
  { text: "High balance", x: 1094, y: 1168, size: "text-[15px]" },
  { text: "Bad credit", x: 1221, y: 934, size: "text-[15px]" },
];

const KEY = [
  { name: "Customer", tone: "bg-[#5b94f8]" },
  { name: "Sales", tone: "bg-[#65b3b7]" },
  { name: "Management", tone: "bg-[#ef8f4c]" },
  { name: "Credit department", tone: "bg-[#db726f]" },
];

function DiagramKey() {
  return (
    <div className="absolute left-[16px] top-[67px] h-[178px] w-[206px] rounded-[14px] border-2 border-[#4c525c] bg-white pl-[26px] pt-[20px] text-[#1a1a1a]">
      <h3 className="ml-3 text-base font-bold leading-5">Diagram Key</h3>
      <ul className="mt-2 flex h-[108px] flex-col justify-between">
        {KEY.map((k) => (
          <li key={k.name} className="flex h-[22px] items-center gap-[10px]">
            <span className={`size-[22px] rounded-full border border-dotted border-[#555] ${k.tone}`} />
            <span className="pb-[3px] text-xs leading-4">{k.name}</span>
          </li>
        ))}
      </ul>
    </div>
  );
}

function Canvas() {
  return (
    <main className="min-w-0 flex-1 overflow-hidden bg-[#f1f2f4] pr-[6px] pt-[37px]">
      <div className="relative h-full bg-white font-['Liberation_Sans',Arial,sans-serif] shadow-[0_0_6px_rgba(0,0,0,0.35)]">
        <Grid />
        <DiagramKey />
        <div className="absolute left-[499px] top-[64px] w-[405px] text-center text-[#a7acb6]">
          <h2 className="border-b-2 border-[#a3a8b3] pb-px text-[22px] font-bold leading-[28px]">Business process flow example</h2>
          <p className="pt-[2px] font-['Liberation_Sans','Noto_Sans_CJK_SC',sans-serif] text-[13px] leading-[20px] text-[#b4b8c0]">松 陈&nbsp; |&nbsp; May 31, 2023</p>
        </div>
        <Lanes />
        <Connectors />
        {NODES.map((n) => (
          <DiagramNode key={`${n.x}-${n.y}`} node={n} />
        ))}
        {LABELS.map((l) => (
          <span
            key={`${l.x}-${l.y}`}
            className={`absolute -translate-x-1/2 -translate-y-1/2 whitespace-nowrap leading-5 text-[#4d4d4d] ${l.size}`}
            style={{ left: l.x - VIEW.x, top: l.y - VIEW.y }}
          >
            {l.text}
          </span>
        ))}
        <Marks />
      </div>
    </main>
  );
}

export default function App() {
  return (
    <div className="flex h-screen flex-col overflow-hidden font-[Inter,sans-serif]">
      <Toolbar />
      <div className="flex min-h-0 flex-1">
        <Rail />
        <ShapesPanel />
        <Canvas />
      </div>
    </div>
  );
}
